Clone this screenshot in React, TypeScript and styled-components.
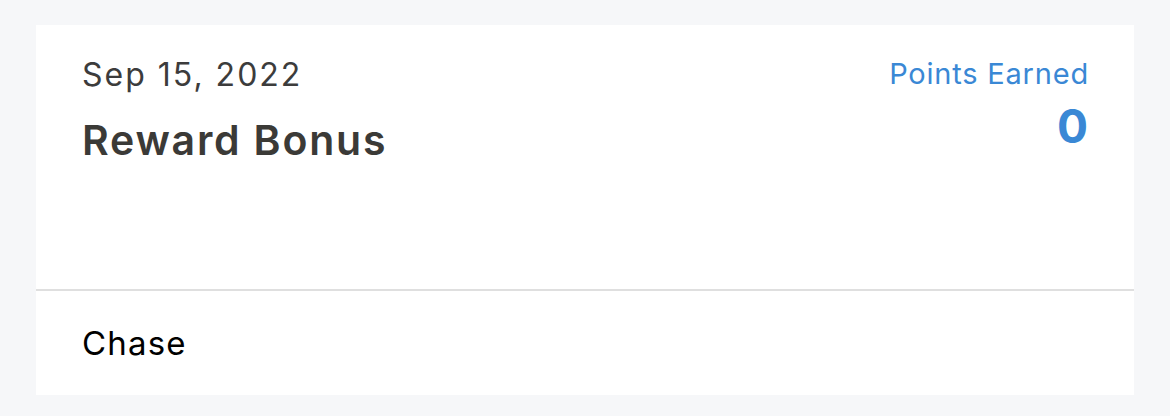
import styled, { createGlobalStyle } from "styled-components"

const GlobalStyle = createGlobalStyle`
  html, body {
    margin: 0;
    padding: 0;
    background: #f6f7f9;
    font-family: Inter, "Noto Sans", sans-serif;
  }
`

const Page = styled.div`
  padding: 25px 36px 21px 36px;
`

const Card = styled.div`
  background: #ffffff;
  display: flex;
  flex-direction: column;
`

const Top = styled.div`
  height: 266px;
  box-sizing: border-box;
  padding: 31px 46px 0 46px;
  display: flex;
  justify-content: space-between;
  align-items: flex-start;
  border-bottom: 2px solid #dfdfdf;
`

const Left = styled.div`
  display: flex;
  flex-direction: column;
  gap: 22px;
`

const Right = styled.div`
  display: flex;
  flex-direction: column;
  align-items: flex-end;
  gap: 8px;
  padding-top: 1px;
`

const DateText = styled.div`
  font-size: 32px;
  line-height: 38px;
  letter-spacing: 2px;
  color: #3c3c3c;
`

const Title = styled.div`
  font-size: 41px;
  line-height: 48px;
  font-weight: 600;
  letter-spacing: 1.8px;
  color: #3b3a37;
`

const Label = styled.div`
  font-size: 29px;
  line-height: 34px;
  letter-spacing: 0.8px;
  color: #3a88d5;
  margin-right: -1px;
`

const Points = styled.div`
  font-size: 46px;
  line-height: 54px;
  font-weight: 700;
  color: #3a88d5;
`

const Bottom = styled.div`
  height: 104px;
  display: flex;
  align-items: center;
  padding: 0 46px;
  font-size: 33px;
  letter-spacing: 1.2px;
  color: #000000;
`

export default function App() {
  return (
    <Page>
      <GlobalStyle />
      <Card>
        <Top>
          <Left>
            <DateText>Sep 15, 2022</DateText>
            <Title>Reward Bonus</Title>
          </Left>
          <Right>
            <Label>Points Earned</Label>
            <Points>0</Points>
          </Right>
        </Top>
        <Bottom>Chase</Bottom>
      </Card>
    </Page>
  )
}
